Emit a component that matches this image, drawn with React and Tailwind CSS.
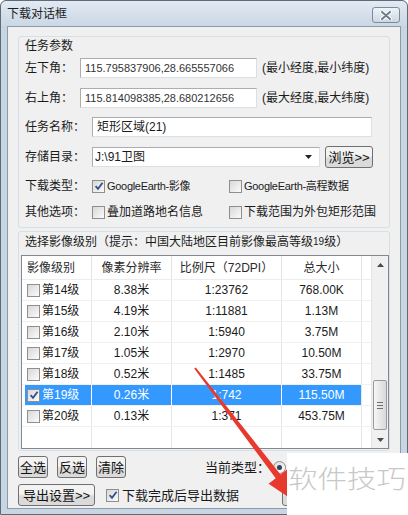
import React from 'react';

const rows = [
  { lv: '第14级', res: '8.38米', scale: '1:23762', size: '768.00K' },
  { lv: '第15级', res: '4.19米', scale: '1:11881', size: '1.13M' },
  { lv: '第16级', res: '2.10米', scale: '1:5940', size: '3.75M' },
  { lv: '第17级', res: '1.05米', scale: '1:2970', size: '10.50M' },
  { lv: '第18级', res: '0.52米', scale: '1:1485', size: '33.75M' },
  { lv: '第19级', res: '0.26米', scale: '1:742', size: '115.50M', checked: true, selected: true },
  { lv: '第20级', res: '0.13米', scale: '1:371', size: '453.75M' },
];

// small win7 style checkbox
function CheckBox({ checked = false }) {
  return (
    <span className="flex h-[13px] w-[13px] shrink-0 items-center justify-center border border-[#8f8f8f] bg-gradient-to-br from-[#d8d8d8] to-[#fbfbfb]">
      {checked && (
        <svg width="10" height="10" viewBox="0 0 10 10">
          <path d="M1.6 5.2 L4 7.8 L8.6 1.8" fill="none" stroke="#34508f" strokeWidth="1.8" />
        </svg>
      )}
    </span>
  );
}

function Button({ children, className = '' }) {
  return (
    <div
      className={`flex h-[22px] shrink-0 items-center justify-center rounded-[3px] border border-[#707070] bg-gradient-to-b from-[#f3f3f3] from-45% to-[#dadada] to-55% text-[13px] text-[#111] ${className}`}
    >
      {children}
    </div>
  );
}

function Field({ children, className = '' }) {
  return (
    <div
      className={`flex h-[20px] shrink-0 items-center border border-[#abadb3] border-b-[#dbdfe6] border-r-[#dbdfe6] bg-white px-[4px] ${className}`}
    >
      {children}
    </div>
  );
}

export default function App() {
  return (
    <div className="relative h-[515px] w-[408px] overflow-hidden bg-white font-['Liberation_Sans','Noto_Sans_CJK_SC',sans-serif] text-[12px] leading-none text-[#1b1b1b]">
      <div className="flex h-full flex-col rounded-t-[6px] border border-[#5f6b78] bg-[#c8d5e3] px-[6px] pb-[5px]">
        {/* title bar */}
        <div className="-mx-[6px] flex h-[25px] shrink-0 items-center justify-between rounded-t-[6px] bg-gradient-to-b from-[#e2eaf3] to-[#cad7e5] pl-[6px] pr-[7px]">
          <span className="text-[12px] text-[#1e1e1e]">下载对话框</span>
          <div className="mt-[3px] flex h-[16px] w-[28px] items-center justify-center rounded-[3px] border border-[#7d8a99] bg-gradient-to-b from-[#eef3f8] to-[#cdd8e4]">
            <svg width="12" height="9" viewBox="0 0 12 9">
              <path d="M2 1 L10 8 M10 1 L2 8" stroke="#ffffff" strokeWidth="4" strokeLinecap="round" />
              <path d="M2 1 L10 8 M10 1 L2 8" stroke="#6f7c8a" strokeWidth="2" strokeLinecap="round" />
            </svg>
          </div>
        </div>

        {/* client area */}
        <div className="flex flex-1 flex-col border border-[#8c9aa9] bg-[#f0f0f0] px-[10px] pt-[9px]">
          {/* task parameters */}
          <div className="flex h-[192px] shrink-0 flex-col rounded-[3px] border border-[#d5dfe5] pl-[6px] pt-[1px]">
            <div className="flex h-[16px] items-center">任务参数</div>

            <div className="mt-[4px] flex h-[20px] items-center">
              <span className="w-[55px] shrink-0">左下角：</span>
              <Field className="w-[177px] text-[11px] text-[#333]">115.795837906,28.665557066</Field>
              <span className="ml-[5px]">(最小经度,最小纬度)</span>
            </div>

            <div className="mt-[10px] flex h-[20px] items-center">
              <span className="w-[55px] shrink-0">右上角：</span>
              <Field className="w-[177px] text-[11px] text-[#333]">115.814098385,28.680212656</Field>
              <span className="ml-[5px]">(最大经度,最大纬度)</span>
            </div>

            <div className="mt-[9px] flex h-[20px] items-center">
              <span className="w-[67px] shrink-0">任务名称：</span>
              <Field className="w-[280px]">矩形区域(21)</Field>
            </div>

            <div className="mt-[10px] flex h-[20px] items-center">
              <span className="w-[67px] shrink-0">存储目录：</span>
              <Field className="w-[228px] justify-between pl-[2px] pr-[7px]">
                <span>J:\91卫图</span>
                <svg width="7" height="4" viewBox="0 0 7 4">
                  <path d="M0 0 H7 L3.5 4 Z" fill="#222" />
                </svg>
              </Field>
              <Button className="ml-[5px] w-[48px] text-[12px]">浏览&gt;&gt;</Button>
            </div>

            <div className="mt-[10px] flex h-[18px] items-center">
              <span className="w-[67px] shrink-0">下载类型：</span>
              <div className="flex w-[137px] items-center gap-[2px]">
                <CheckBox checked />
                <span className="text-[11px] tracking-[-0.3px]">GoogleEarth-影像</span>
              </div>
              <div className="flex items-center gap-[2px]">
                <CheckBox />
                <span className="text-[11px] tracking-[-0.3px]">GoogleEarth-高程数据</span>
              </div>
            </div>

            <div className="mt-[8px] flex h-[18px] items-center">
              <span className="w-[67px] shrink-0">其他选项：</span>
              <div className="flex w-[137px] items-center gap-[2px]">
                <CheckBox />
                <span>叠加道路地名信息</span>
              </div>
              <div className="flex items-center gap-[2px]">
                <CheckBox />
                <span>下载范围为外包矩形范围</span>
              </div>
            </div>
          </div>

          {/* level selection */}
          <div className="mt-[3px] flex shrink-0 flex-col rounded-[3px] border border-[#d5dfe5] pb-[1px] pl-[2px] pt-[1px]">
            <div className="mt-[1px] flex h-[16px] items-center pl-[4px]">
              选择影像级别（提示：中国大陆地区目前影像最高等级<span className="text-[10px]">19</span>级）
            </div>
            <div className="mt-[5px] flex h-[194px] w-[368px] border border-[#828790] bg-white">
              <div className="flex flex-1 flex-col">
                <div className="grid h-[24px] grid-cols-[70px_80px_110px_80px_9px] border-b border-[#ececec] text-[#2a2a2a]">
                  <div className="flex items-center border-r border-[#e3e3e3] pl-[5px]">影像级别</div>
                  <div className="flex items-center justify-center border-r border-[#e3e3e3]">像素分辨率</div>
                  <div className="flex items-center justify-center border-r border-[#e3e3e3]">比例尺（72DPI）</div>
                  <div className="flex items-center justify-center border-r border-[#e3e3e3]">总大小</div>
                  <div />
                </div>
                {rows.map((r) =>
                  r.selected ? (
                    <div key={r.lv} className="grid h-[21px] grid-cols-[70px_80px_110px_80px_9px] border-b border-[#f0f0f0] text-white">
                      <div className="flex border-r border-white pl-[3px]">
                        <div className="flex flex-1 items-center gap-[2px] bg-[#3399ff] pl-[2px]">
                          <CheckBox checked />
                          <span>{r.lv}</span>
                        </div>
                      </div>
                      <div className="flex items-center justify-center border-r border-white bg-[#3399ff]">{r.res}</div>
                      <div className="flex items-center justify-center border-r border-white bg-[#3399ff]">{r.scale}</div>
                      <div className="flex items-center justify-center border-r border-[#e6e6e6] bg-[#3399ff]">{r.size}</div>
                      <div />
                    </div>
                  ) : (
                    <div key={r.lv} className="grid h-[21px] grid-cols-[70px_80px_110px_80px_9px] border-b border-[#f0f0f0]">
                      <div className="flex items-center gap-[2px] border-r border-[#e6e6e6] pl-[5px]">
                        <CheckBox />
                        <span>{r.lv}</span>
                      </div>
                      <div className="flex items-center justify-center border-r border-[#e6e6e6]">{r.res}</div>
                      <div className="flex items-center justify-center border-r border-[#e6e6e6]">{r.scale}</div>
                      <div className="flex items-center justify-center border-r border-[#e6e6e6]">{r.size}</div>
                      <div />
                    </div>
                  )
                )}
                <div className="grid flex-1 grid-cols-[70px_80px_110px_80px_9px]">
                  <div className="border-r border-[#e6e6e6]" />
                  <div className="border-r border-[#e6e6e6]" />
                  <div className="border-r border-[#e6e6e6]" />
                  <div className="border-r border-[#e6e6e6]" />
                  <div />
                </div>
              </div>

              {/* scrollbar */}
              <div className="flex w-[17px] shrink-0 flex-col border-l border-[#e4e4e4] bg-[#f0f0f0]">
                <div className="flex h-[17px] items-center justify-center">
                  <svg width="7" height="4" viewBox="0 0 7 4">
                    <path d="M0 4 H7 L3.5 0 Z" fill="#4a4a4a" />
                  </svg>
                </div>
                <div className="flex-1" />
                <div className="mx-[1px] flex h-[50px] flex-col items-center justify-center gap-[2px] rounded-[2px] border border-[#9a9a9a] bg-gradient-to-r from-[#f6f6f6] to-[#d9d9d9]">
                  <span className="h-px w-[6px] bg-[#6f6f6f]" />
                  <span className="h-px w-[6px] bg-[#6f6f6f]" />
                  <span className="h-px w-[6px] bg-[#6f6f6f]" />
                </div>
                <div className="h-px" />
                <div className="flex h-[17px] items-center justify-center">
                  <svg width="7" height="4" viewBox="0 0 7 4">
                    <path d="M0 0 H7 L3.5 4 Z" fill="#4a4a4a" />
                  </svg>
                </div>
              </div>
            </div>
          </div>

          {/* select buttons */}
          <div className="mt-[5px] flex h-[22px] shrink-0 items-center">
            <Button className="w-[30px]">全选</Button>
            <Button className="ml-[9px] w-[30px]">反选</Button>
            <Button className="ml-[9px] w-[30px]">清除</Button>
            <span className="ml-[79px] text-[13px]">当前类型：</span>
            <span className="ml-[3px] flex h-[13px] w-[13px] items-center justify-center rounded-full border border-[#8f8f8f] bg-gradient-to-br from-[#dcdcdc] to-[#fbfbfb]">
              <span className="h-[5px] w-[5px] rounded-full bg-[#2f3f5f]" />
            </span>
            {/* label mostly hidden under the watermark */}
            <span className="ml-[2px] w-[5px] overflow-hidden whitespace-nowrap text-[13px]">影像</span>
          </div>

          {/* export row */}
          <div className="mt-[6px] flex h-[22px] shrink-0 items-center">
            <Button className="w-[77px]">导出设置&gt;&gt;</Button>
            <span className="ml-[11px]">
              <CheckBox checked />
            </span>
            <span className="ml-[3px] text-[13px]">下载完成后导出数据</span>
            <Button className="ml-[43px] w-[80px]" />
          </div>
        </div>
      </div>

      {/* red annotation arrow */}
      <svg className="pointer-events-none absolute left-0 top-0" width="408" height="515" viewBox="0 0 408 515">
        <polygon
          points="195.8,367.4 280.5,474.6 287.6,469.1 300,505 268.6,483.7 275.7,478.2 194.2,368.6"
          fill="#e8392f"
        />
      </svg>

      {/* watermark */}
      <div className="absolute left-[287px] top-[453px] flex h-[62px] w-[121px] items-start bg-white pl-[1px] pt-[14px]">
        <span className="origin-left scale-x-[1.18] whitespace-nowrap text-[25px] font-light leading-none text-[#c8c8c8]">
          软件技巧
        </span>
      </div>
    </div>
  );
}
